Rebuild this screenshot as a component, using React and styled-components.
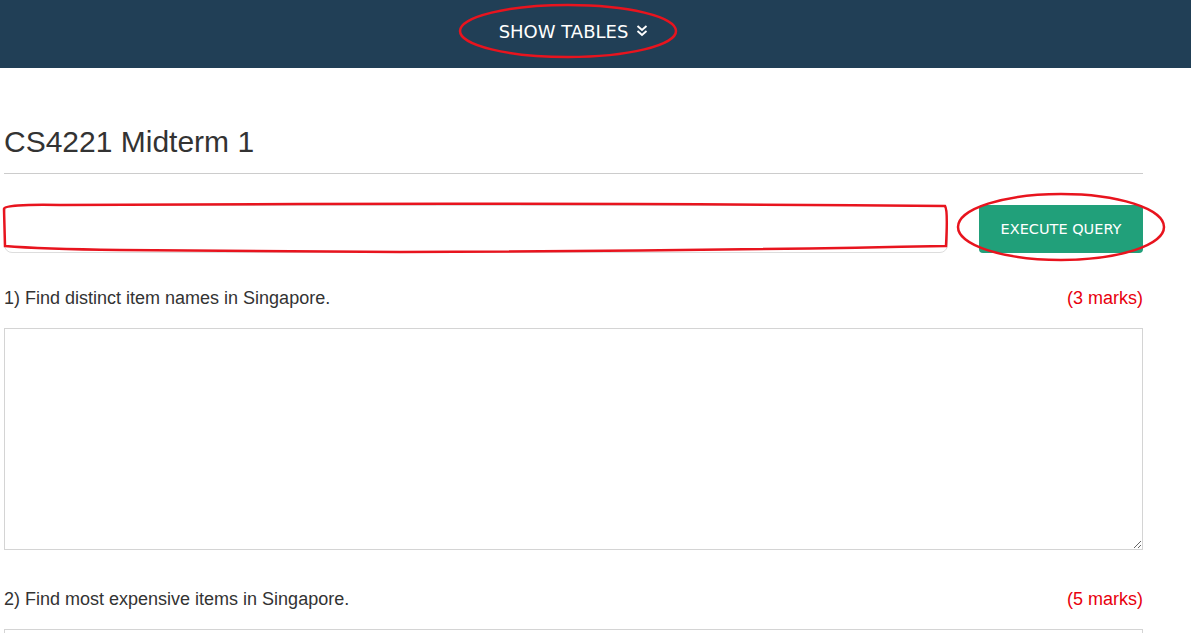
import React from 'react';
import styled, { createGlobalStyle } from 'styled-components';

const Global = createGlobalStyle`
  html, body { margin: 0; padding: 0; background: #fff; }
  body { font-family: "Liberation Sans", Arial, sans-serif; color: #333; overflow: hidden; }
  * { box-sizing: border-box; }
`;

const Page = styled.div`
  position: relative;
  width: 1191px;
  height: 633px;
  overflow: hidden;
`;

const TopBar = styled.div`
  background: #213f56;
  height: 68px;
  display: flex;
  align-items: center;
  padding-left: 4px;
`;

const TopInner = styled.div`
  width: 1139px;
  display: flex;
  justify-content: center;
`;

const ShowTables = styled.div`
  display: flex;
  align-items: center;
  gap: 8px;
  color: #fff;
  font-family: "DejaVu Sans", Verdana, sans-serif;
  font-size: 18px;
  cursor: pointer;
  margin-top: -6px;
`;

const Content = styled.div`
  width: 1139px;
  margin-left: 4px;
  padding-top: 56px;
`;

const Title = styled.h1`
  margin: 0;
  font-size: 30px;
  font-weight: 400;
  line-height: 36px;
  color: #333;
  padding-bottom: 13px;
  border-bottom: 1px solid #ccc;
`;

const QueryRow = styled.div`
  display: flex;
  gap: 31px;
  margin-top: 31px;
`;

const QueryInput = styled.input`
  flex: 1;
  height: 48px;
  border: 1px solid #ddd;
  border-radius: 8px;
  outline: none;
  padding: 0 12px;
  font-size: 16px;
`;

const ExecButton = styled.button`
  width: 164px;
  height: 48px;
  border: none;
  border-radius: 4px;
  background: #21a07a;
  color: #fff;
  font-family: "DejaVu Sans", Verdana, sans-serif;
  font-size: 14.5px;
  cursor: pointer;
`;

const Question = styled.div`
  margin-top: ${p => p.top}px;
`;

const QuestionHead = styled.div`
  display: flex;
  justify-content: space-between;
  font-size: 18px;
  line-height: 20px;
`;

const Marks = styled.span`
  color: #e8000d;
`;

const Answer = styled.textarea`
  display: block;
  width: 100%;
  height: 222px;
  margin-top: 20px;
  border: 1px solid #d4d4d4;
  border-radius: 0;
  resize: vertical;
  font-size: 14px;
  outline: none;
`;

const Marker = styled.svg`
  position: absolute;
  left: 0;
  top: 0;
  pointer-events: none;
`;

const ChevronsDown = () => (
  <svg width="12" height="12" viewBox="0 0 12 12" fill="none" stroke="#fff" strokeWidth="1.9">
    <path d="M1.5 1 L6 5 L10.5 1" />
    <path d="M1.5 6 L6 10 L10.5 6" />
  </svg>
);

const questions = [
  { text: '1) Find distinct item names in Singapore.', marks: 3, top: 35 },
  { text: '2) Find most expensive items in Singapore.', marks: 5, top: 39 },
];

export default function App() {
  return (
    <Page>
      <Global />
      <TopBar>
        <TopInner>
          <ShowTables>
            SHOW TABLES <ChevronsDown />
          </ShowTables>
        </TopInner>
      </TopBar>
      <Content>
        <Title>CS4221 Midterm 1</Title>
        <QueryRow>
          <QueryInput />
          <ExecButton>EXECUTE QUERY</ExecButton>
        </QueryRow>
        {questions.map(q => (
          <Question key={q.text} top={q.top}>
            <QuestionHead>
              <span>{q.text}</span>
              <Marks>({q.marks} marks)</Marks>
            </QuestionHead>
            <Answer />
          </Question>
        ))}
      </Content>
      <Marker width="1191" height="633" fill="none" stroke="#e8141e" strokeWidth="2.5">
        <ellipse cx="568" cy="31" rx="108" ry="26" />
        <path d="M4 209 Q4 204 60 205 L300 204 Q600 203 945 206 Q948 210 946 246 Q700 251 400 252 L120 250 Q40 249 5 246 Z" />
        <ellipse cx="1061" cy="227" rx="103" ry="33" />
      </Marker>
    </Page>
  );
}
